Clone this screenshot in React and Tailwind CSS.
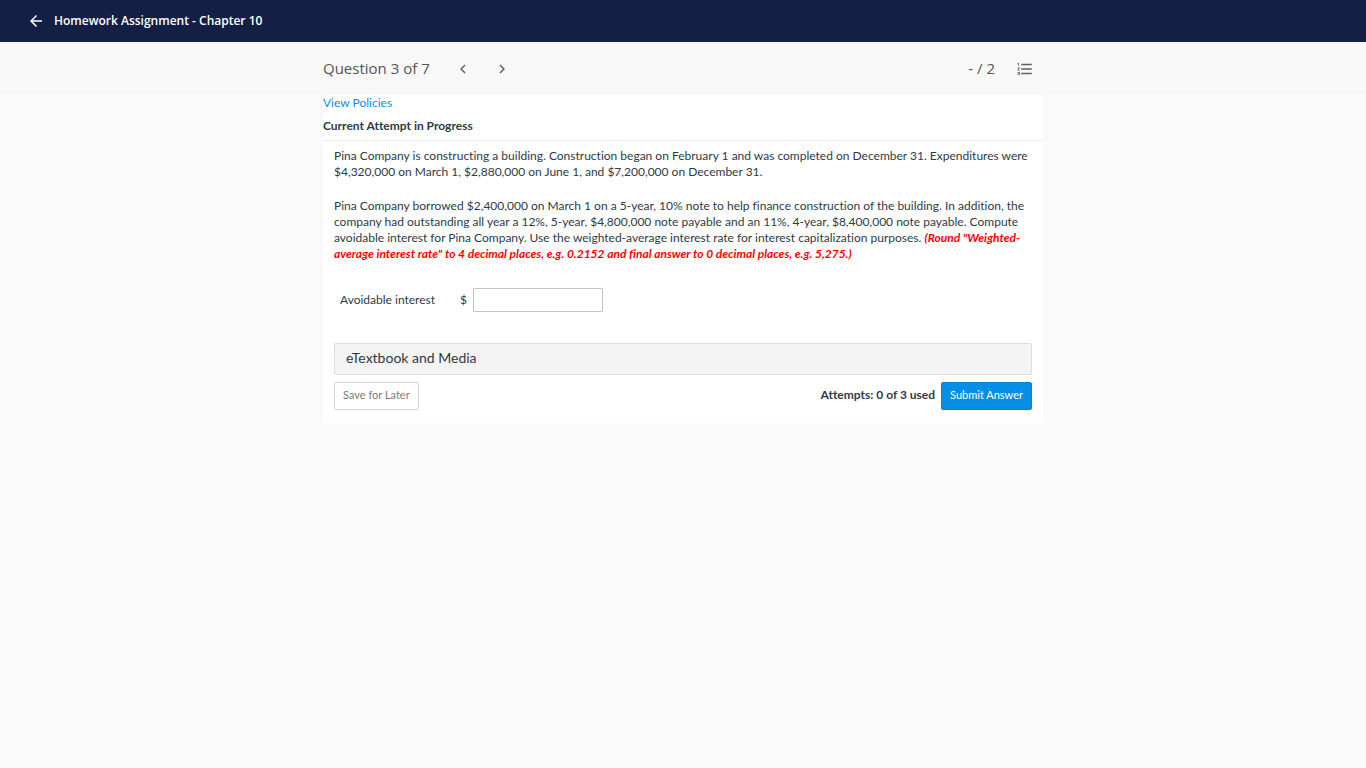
import { MdArrowBack, MdChevronLeft, MdChevronRight, MdFormatListNumbered } from "react-icons/md";

function TopBar() {
  return (
    <header className="flex h-[42px] items-center bg-[#141f45] px-[27px] text-white">
      <button type="button" aria-label="Back" className="mr-[9px]">
        <MdArrowBack className="size-[18px]" />
      </button>
      <h1 className="font-['Open_Sans',sans-serif] text-[12px] leading-4 font-semibold">
        Homework Assignment - Chapter 10
      </h1>
    </header>
  );
}

function QuestionBar() {
  return (
    <div className="bg-[#f8f8f8] font-['Open_Sans',sans-serif] text-[15px] leading-5 text-[#555]">
      <div className="mx-auto flex h-[53px] max-w-[720px] items-center">
        <h2 className="pb-[2px]">Question 3 of 7</h2>
        <button type="button" aria-label="Previous question" className="ml-6">
          <MdChevronLeft className="size-[18px] text-[#666]" />
        </button>
        <button type="button" aria-label="Next question" className="ml-[21px]">
          <MdChevronRight className="size-[18px] text-[#666]" />
        </button>
        <span className="ml-auto pb-[2px]">- / 2</span>
        <button type="button" aria-label="Question list" className="mr-[9px] ml-[21px]">
          <MdFormatListNumbered className="size-[18px] text-[#5f5f5f]" />
        </button>
      </div>
    </div>
  );
}

function Question() {
  return (
    <main className="mx-auto max-w-[720px] bg-white pb-[13px] text-[12px] leading-4 text-[#2d3b45] [font-variant-ligatures:none]">
      <a href="#policies" className="block text-[#0a8ee0]">
        View Policies
      </a>
      <h3 className="mt-[7px] border-b border-[#e8e8e8] pb-[6px] font-bold">Current Attempt in Progress</h3>
      <div className="px-[11px] pt-[7px]">
        <p>
          Pina Company is constructing a building. Construction began on February 1 and was completed on December
          31. Expenditures were $4,320,000 on March 1, $2,880,000 on June 1, and $7,200,000 on December 31.
        </p>
        <p className="mt-[18px]">
          Pina Company borrowed $2,400,000 on March 1 on a 5-year, 10% note to help finance construction of the
          building. In addition, the company had outstanding all year a 12%, 5-year, $4,800,000 note payable and an
          11%, 4-year, $8,400,000 note payable. Compute avoidable interest for Pina Company. Use the
          weighted-average interest rate for interest capitalization purposes.{" "}
          <em className="font-bold text-[#ff0000]">
            (Round "Weighted-average interest rate" to 4 decimal places, e.g. 0.2152 and final answer to 0 decimal
            places, e.g. 5,275.)
          </em>
        </p>
        <div className="mt-[26px] flex items-center pl-[6px]">
          <label htmlFor="interest">Avoidable interest</label>
          <span className="ml-[25px]">$</span>
          <input
            id="interest"
            type="text"
            className="ml-[6px] h-6 w-[130px] rounded-[1px] border border-[#c4c4c4] bg-white px-1"
          />
        </div>
        <button
          type="button"
          className="mt-[31px] block h-8 w-full rounded-[2px] border border-[#dcdcdc] bg-[#f4f4f4] px-[11px] pb-[2px] text-left text-[14px]"
        >
          eTextbook and Media
        </button>
        <div className="mt-[7px] flex items-center">
          <button
            type="button"
            className="h-7 rounded-[2px] border border-[#d6d6d6] bg-white px-2 pb-[2px] text-[11px] text-[#7a7a7a]"
          >
            Save for Later
          </button>
          <span className="mr-[6px] ml-auto pb-[2px] font-bold">Attempts: 0 of 3 used</span>
          <button
            type="button"
            className="h-7 rounded-[2px] border border-[#0a80cc] bg-[#058ee6] px-2 pb-[2px] text-[11px] text-white"
          >
            Submit Answer
          </button>
        </div>
      </div>
    </main>
  );
}

export default function App() {
  return (
    <div className="min-h-screen bg-[#fafafa] font-['Lato',sans-serif]">
      <TopBar />
      <QuestionBar />
      <Question />
    </div>
  );
}
